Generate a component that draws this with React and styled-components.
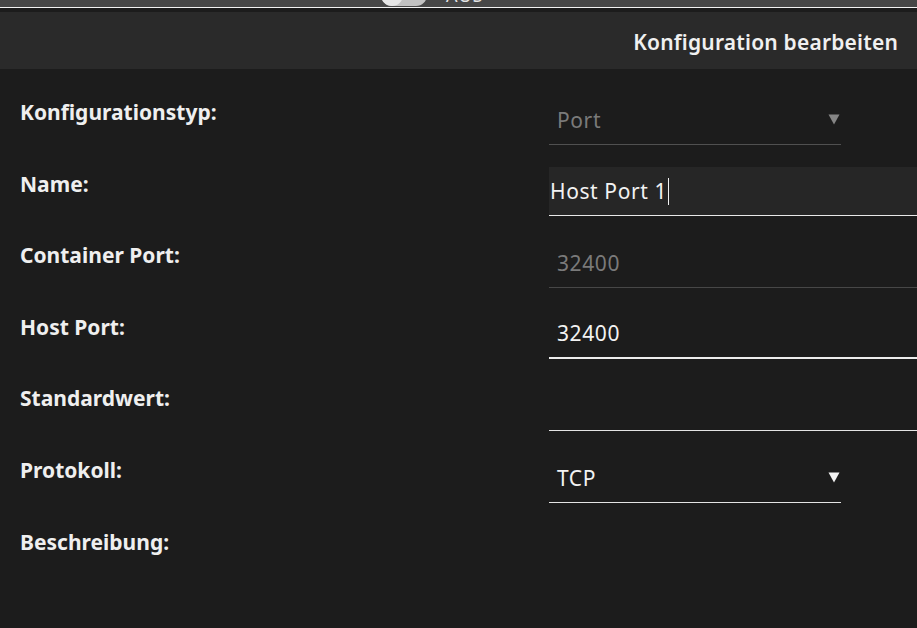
import React from 'react';
import styled, { createGlobalStyle } from 'styled-components';

const GlobalStyle = createGlobalStyle`
  html, body {
    margin: 0;
    padding: 0;
    background: #1c1c1c;
  }
  body {
    font-family: "Noto Sans", "Open Sans", sans-serif;
    color: #eeeeee;
  }
`;

const Page = styled.div`
  width: 100%;
  height: 628px;
  overflow: hidden;
  background: #1c1c1c;
`;

const TopStrip = styled.div`
  height: 7px;
  background: #474747;
  overflow: hidden;
  display: flex;
  align-items: flex-end;
  padding-left: 381px;
  border-bottom: 1px solid #f2f2f2;
`;

const Toggle = styled.div`
  position: relative;
  flex: none;
  width: 46px;
  height: 22px;
  margin-bottom: 1px;
  border-radius: 11px;
  background: #c2c2c2;
`;

const Knob = styled.div`
  position: absolute;
  left: 0;
  top: 0;
  width: 22px;
  height: 22px;
  border-radius: 50%;
  background: #e6e6e6;
`;

const ToggleText = styled.span`
  margin-left: 19px;
  font-size: 18px;
  line-height: 18px;
  color: #e4e4e4;
  letter-spacing: 1px;
  transform: translateY(-3px);
`;

const Gap = styled.div`
  height: 4px;
  background: #1c1c1c;
`;

const Header = styled.div`
  box-sizing: border-box;
  height: 57px;
  background: #2a2a2a;
  display: flex;
  align-items: center;
  justify-content: flex-end;
  padding: 3px 19px 0 0;
  font-size: 21px;
  font-weight: 600;
  letter-spacing: 0.2px;
  color: #f0f0f0;
`;

const Form = styled.div`
  padding: 4px 0 0 20px;
`;

const Row = styled.div`
  display: grid;
  grid-template-columns: 529px 1fr;
  height: 71.6px;
`;

const Label = styled.div`
  padding-top: 25px;
  font-size: 21px;
  line-height: 28px;
  font-weight: 700;
  color: #efefef;
`;

const Field = styled.div`
  align-self: end;
  box-sizing: border-box;
  height: ${p => p.$thick ? 50 : 49}px;
  width: ${p => p.$select ? '292px' : '100%'};
  display: flex;
  align-items: center;
  justify-content: space-between;
  padding: 0 ${p => p.$select ? 1 : 0}px 0 ${p => p.$focused ? 1 : 8}px;
  background: ${p => p.$focused ? '#262626' : 'transparent'};
  border-bottom: ${p => p.$thick ? 2 : 1}px solid ${p => p.$line};
  font-size: 21px;
  letter-spacing: 0.6px;
  color: ${p => p.$muted ? '#7a7a7a' : '#f2f2f2'};
`;

const Value = styled.span`
  display: flex;
  align-items: center;
  line-height: 28px;
`;

const Caret = styled.span`
  display: inline-block;
  width: 1px;
  height: 27px;
  margin-left: 1px;
  background: #f2f2f2;
`;

const Arrow = ({ color }) => (
  <svg width="12" height="11" viewBox="0 0 12 11" style={{ marginTop: 0 }}>
    <path d="M0.5 0.5 L11.5 0.5 L6 10.5 Z" fill={color} />
  </svg>
);

export default function App() {
  return (
    <Page>
      <GlobalStyle />
      <TopStrip>
        <Toggle><Knob /></Toggle>
        <ToggleText>AUS</ToggleText>
      </TopStrip>
      <Gap />
      <Header>Konfiguration bearbeiten</Header>
      <Form>
        <Row>
          <Label>Konfigurationstyp:</Label>
          <Field $select $muted $line="#505050">
            <Value>Port</Value>
            <Arrow color="#858585" />
          </Field>
        </Row>
        <Row>
          <Label>Name:</Label>
          <Field $focused $line="#e8e8e8">
            <Value>Host Port 1<Caret /></Value>
          </Field>
        </Row>
        <Row>
          <Label>Container Port:</Label>
          <Field $muted $line="#474747">
            <Value>32400</Value>
          </Field>
        </Row>
        <Row>
          <Label>Host Port:</Label>
          <Field $thick $line="#ececec">
            <Value>32400</Value>
          </Field>
        </Row>
        <Row>
          <Label>Standardwert:</Label>
          <Field $line="#e4e4e4">
            <Value />
          </Field>
        </Row>
        <Row>
          <Label>Protokoll:</Label>
          <Field $select $line="#e4e4e4">
            <Value>TCP</Value>
            <Arrow color="#f2f2f2" />
          </Field>
        </Row>
        <Row>
          <Label>Beschreibung:</Label>
        </Row>
      </Form>
    </Page>
  );
}
